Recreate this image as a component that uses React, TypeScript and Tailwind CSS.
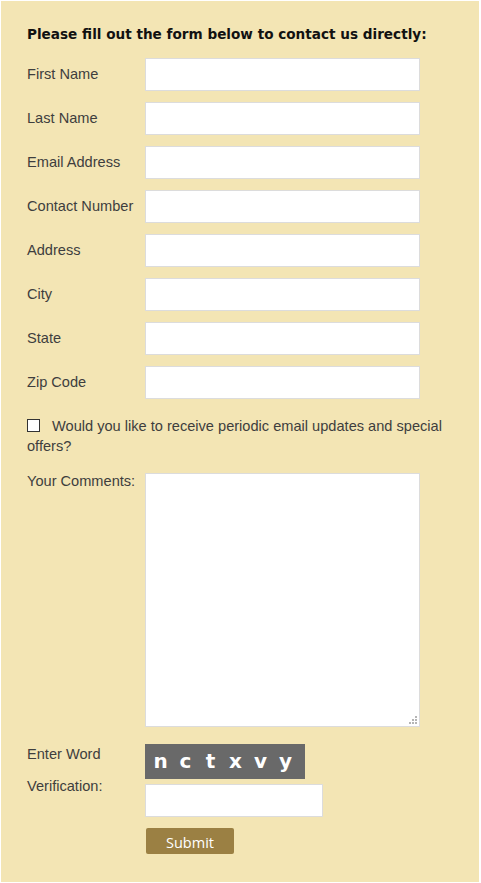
import React from "react";

const fields = [
  "First Name",
  "Last Name",
  "Email Address",
  "Contact Number",
  "Address",
  "City",
  "State",
  "Zip Code",
];

const inputCls =
  "block w-[275px] h-[33px] bg-white border border-[#dcdcdc] outline-none";

export default function App() {
  return (
    <div className="w-[481px] h-[883px] bg-white p-px">
      <div
        className="w-[478px] h-[881px] bg-[#f3e5b4] pl-[26px] pt-[24px] text-[#3e3e3e]"
        style={{ fontFamily: '"Liberation Sans", Arial, sans-serif' }}
      >
        <h2
          className="text-[13.6px] font-bold text-[#111] leading-[18px] m-0"
          style={{ fontFamily: '"DejaVu Sans", Verdana, sans-serif' }}
        >
          Please fill out the form below to contact us directly:
        </h2>
        <div className="mt-[15px] flex flex-col gap-[11px]">
          {fields.map((f) => (
            <div key={f} className="flex">
              <label className="w-[118px] pt-[7px] text-[14.6px] leading-[18px]">{f}</label>
              <input className={inputCls} />
            </div>
          ))}
        </div>
        <p className="mt-[17px] w-[430px] text-[14.6px] leading-[20px]">
          <span className="inline-block w-[13px] h-[13px] border border-[#333] bg-white align-[-1px] mr-[12px]" />
          Would you like to receive periodic email updates and special offers?
        </p>
        <div className="mt-[17px] flex">
          <label className="w-[118px] text-[14.6px] leading-[18px] -mt-px">Your Comments:</label>
          <div className="relative">
            <textarea className="block w-[275px] h-[254px] bg-white border border-[#dcdcdc] outline-none resize-none" />
            <div className="absolute right-[3px] bottom-[3px] grid grid-cols-3 gap-px w-[8px]">
              <span className="w-[2px] h-[2px]" />
              <span className="w-[2px] h-[2px]" />
              <span className="w-[2px] h-[2px] bg-[#b5b5b5]" />
              <span className="w-[2px] h-[2px]" />
              <span className="w-[2px] h-[2px] bg-[#b5b5b5]" />
              <span className="w-[2px] h-[2px] bg-[#b5b5b5]" />
              <span className="w-[2px] h-[2px] bg-[#b5b5b5]" />
              <span className="w-[2px] h-[2px] bg-[#b5b5b5]" />
              <span className="w-[2px] h-[2px] bg-[#b5b5b5]" />
            </div>
          </div>
        </div>
        <div className="mt-[17px] flex">
          <label className="w-[118px] text-[14.6px] leading-[32px] -mt-[6px]">
            Enter Word
            <br />
            Verification:
          </label>
          <div className="flex flex-col">
            <div
              className="w-[160px] h-[35px] bg-[#696969] flex items-center pl-[3px] text-white font-bold text-[20px]"
              style={{ fontFamily: '"DejaVu Sans", Verdana, sans-serif' }}
            >
              {["n", "c", "t", "x", "v", "y"].map((c, i) => (
                <span key={i} className="w-[25px] text-center leading-[20px] -mt-[2px]">
                  {c}
                </span>
              ))}
            </div>
            <input className="block mt-[5px] w-[178px] h-[33px] bg-white border border-[#dcdcdc] outline-none" />
            <button
              className="mt-[11px] ml-px w-[88px] h-[26px] bg-[#9b8043] text-white text-[14.5px] leading-[20px] pt-[5px] rounded-[2px] flex justify-center"
              style={{ fontFamily: '"Open Sans", sans-serif' }}
            >
              Submit
            </button>
          </div>
        </div>
      </div>
    </div>
  );
}
